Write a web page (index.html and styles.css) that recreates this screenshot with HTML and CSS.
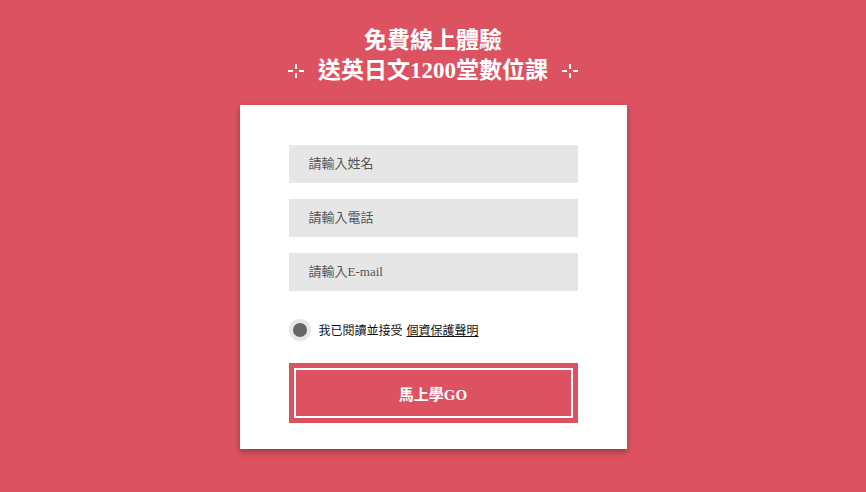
FILE: index.html
```html
<!DOCTYPE html>
<html lang="zh-Hant">

<head>
    <meta charset="UTF-8">
    <meta name="viewport" content="width=device-width, initial-scale=1.0">
    <title>免費線上體驗</title>
    <link rel="stylesheet" href="styles.css">
</head>

<body>
    <main>
        <h1 class="title">
            <span class="line">免費線上體驗</span>
            <span class="line">
                <svg class="spark" viewBox="0 0 16 14" width="16" height="14">
                    <path d="M8 0v5M8 9v5M0 7h5M11 7h5" stroke="#fff" stroke-width="2" />
                </svg>
                送英日文1200堂數位課
                <svg class="spark" viewBox="0 0 16 14" width="16" height="14">
                    <path d="M8 0v5M8 9v5M0 7h5M11 7h5" stroke="#fff" stroke-width="2" />
                </svg>
            </span>
        </h1>

        <form class="card">
            <input class="field" type="text" placeholder="請輸入姓名">
            <input class="field" type="text" placeholder="請輸入電話">
            <input class="field" type="text" placeholder="請輸入E-mail">

            <label class="agree">
                <span class="radio"><span class="dot"></span></span>
                我已閱讀並接受 <a href="#">個資保護聲明</a>
            </label>

            <button type="button" class="go"><span>馬上學GO</span></button>
        </form>
    </main>
</body>

</html>
```

FILE: styles.css
```css
html,
body {
    margin: 0px;
    padding: 0px;
    height: 100%;
}

body {
    background-color: #dd5260;
    color: black;
    font-family: "Liberation Serif", "Noto Sans CJK TC", serif;
    font-size: 13px;
}

main {
    display: flex;
    flex-direction: column;
    align-items: center;
    padding-top: 26px;
}

.title {
    margin: 0px;
    color: #FFFFFF;
    font-size: 23px;
    font-weight: bold;
    text-align: center;
    line-height: 30px;
    display: flex;
    flex-direction: column;
}

.line {
    display: flex;
    align-items: center;
    justify-content: center;
    gap: 14px;
}

.card {
    margin-top: 19px;
    width: 289px;
    padding: 40px 49px 26px 49px;
    background-color: white;
    box-shadow: 0px 3px 6px rgba(0, 0, 0, 0.3);
    display: flex;
    flex-direction: column;
}

.field {
    height: 38px;
    margin: 0px 0px 16px 0px;
    padding: 0px 20px;
    border: none;
    background-color: #e6e6e6;
    font-family: "Liberation Serif", "Noto Sans CJK TC", serif;
    font-size: 13px;
    outline: none;
}

.field::placeholder {
    color: #555555;
}

.agree {
    margin-top: 12px;
    display: flex;
    align-items: center;
    gap: 4px;
    font-size: 12px;
    color: #111111;
}

.agree a {
    color: #111111;
}

.radio {
    width: 22px;
    height: 22px;
    border-radius: 50%;
    background-color: #e6e6e6;
    display: flex;
    align-items: center;
    justify-content: center;
    margin-right: 4px;
}

.dot {
    width: 14px;
    height: 14px;
    border-radius: 50%;
    background-color: #666666;
}

.go {
    margin-top: 22px;
    height: 60px;
    padding: 5px;
    border: none;
    background-color: #dd5260;
    cursor: pointer;
    display: flex;
}

.go span {
    flex: 1;
    border: 2px solid white;
    color: white;
    font-family: "Liberation Serif", "Noto Sans CJK TC", serif;
    font-size: 15px;
    font-weight: bold;
    display: flex;
    align-items: center;
    justify-content: center;
}
```
